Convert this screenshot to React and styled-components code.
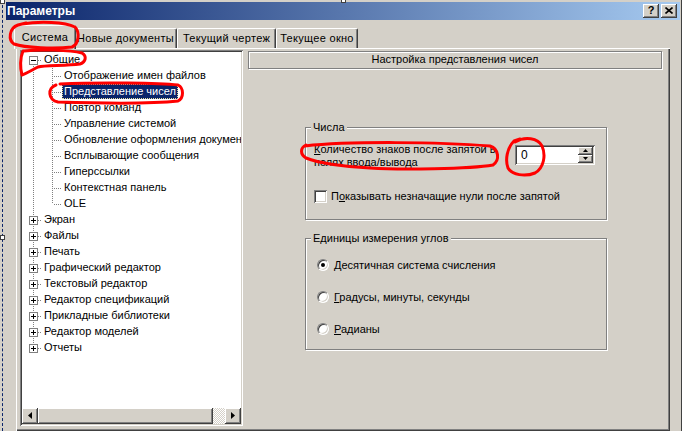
import React from 'react';
import styled, { createGlobalStyle, css } from 'styled-components';

const face = '#D4D0C8';
const shade = '#808080';
const dark = '#404040';
const navy = '#0A246A';

const GlobalStyle = createGlobalStyle`
  html, body { margin: 0; padding: 0; background: ${face}; }
  body {
    font-family: "Liberation Sans", Arial, sans-serif;
    font-size: 11px;
    color: #000;
  }
  * { box-sizing: border-box; }
`;

const raised = css`
  background: ${face};
  box-shadow: inset -1px -1px ${dark}, inset 1px 1px #fff,
    inset -2px -2px ${shade}, inset 2px 2px ${face};
`;

const sunken = css`
  box-shadow: inset 1px 1px ${shade}, inset -1px -1px #fff,
    inset 2px 2px ${dark}, inset -2px -2px ${face};
`;

const etched = css`
  border: 1px solid ${shade};
  box-shadow: inset 1px 1px #fff, 1px 1px #fff;
`;

const Screen = styled.div`
  position: relative;
  width: 682px;
  height: 431px;
  overflow: hidden;
  background: ${face};
  padding: 2px 1px 0 6px;
  border-right: 1px solid ${dark};

  &::before {
    content: '';
    position: absolute;
    left: 2px;
    top: 0;
    bottom: 0;
    border-left: 1px dashed ${navy};
  }
`;

const Handle = styled.span`
  position: absolute;
  width: 5px;
  height: 5px;
  background: #fff;
  border: 1px solid ${dark};
  left: ${(p) => p.$x}px;
  top: ${(p) => p.$y}px;
`;

const Window = styled.div`
  display: flex;
  flex-direction: column;
  height: 100%;
`;

const TitleBar = styled.div`
  height: 18px;
  display: flex;
  align-items: center;
  padding: 0 3px 0 1px;
  background: linear-gradient(to right, ${navy}, #A6CAF0);
`;

const Title = styled.span`
  color: #fff;
  font-weight: bold;
  font-size: 12px;
`;

const CaptionButtons = styled.div`
  margin-left: auto;
  display: flex;
  gap: 2px;
`;

const CaptionButton = styled.div`
  ${raised};
  width: 16px;
  height: 14px;
  display: flex;
  align-items: center;
  justify-content: center;
  font-weight: bold;
  font-size: 11px;
  line-height: 1;
`;

const TabStrip = styled.div`
  display: flex;
  align-items: flex-end;
  height: 28px;
  padding-left: 8px;
`;

const Tab = styled.div`
  position: relative;
  width: ${(p) => p.$w}px;
  height: ${(p) => (p.$active ? 24 : 20)}px;
  margin-right: ${(p) => (p.$active ? -2 : 0)}px;
  margin-bottom: ${(p) => (p.$active ? -1 : 0)}px;
  z-index: ${(p) => (p.$active ? 2 : 1)};
  background: ${face};
  border-top: 1px solid #fff;
  border-left: 1px solid #fff;
  border-right: 1px solid ${dark};
  border-radius: 2px 2px 0 0;
  box-shadow: inset -1px 0 ${shade};
  display: flex;
  justify-content: center;
  padding-top: ${(p) => (p.$active ? 5 : 3)}px;
  white-space: nowrap;
  letter-spacing: 0.3px;
`;

const Panel = styled.div`
  margin-left: 10px;
  width: 654px;
  height: 384px;
  display: flex;
  padding: 2px 0 0 4px;
  background: ${face};
  box-shadow: inset 1px 1px #fff, inset -1px -1px ${dark},
    inset -2px -2px ${shade};
`;

const Tree = styled.div`
  ${sunken};
  width: 223px;
  height: 376px;
  background: #fff;
  padding: 2px;
  display: flex;
  flex-direction: column;
`;

const TreeList = styled.div`
  flex: 1;
  overflow: hidden;
`;

const TreeRow = styled.div`
  display: flex;
  align-items: center;
  height: 16px;
  white-space: nowrap;
`;

const TreeLabel = styled.span`
  height: 15px;
  line-height: 13px;
  padding: 0 1px;
  border: 1px dotted ${(p) => (p.$selected ? '#E8DFA0' : 'transparent')};
  background: ${(p) => (p.$selected ? navy : 'transparent')};
  color: ${(p) => (p.$selected ? '#fff' : '#000')};
`;

const HScroll = styled.div`
  display: flex;
  height: 16px;
`;

const ScrollButton = styled.div`
  ${raised};
  width: 16px;
  height: 16px;
  display: flex;
  align-items: center;
  justify-content: center;
`;

const ScrollThumb = styled.div`
  ${raised};
  width: 175px;
`;

const ScrollTrack = styled.div`
  flex: 1;
  background: repeating-conic-gradient(#fff 0 25%, ${face} 0 50%) 0 0 / 2px 2px;
`;

const RightPane = styled.div`
  margin-left: 5px;
  width: 414px;
  display: flex;
  flex-direction: column;
`;

const Header = styled.div`
  ${etched};
  height: 18px;
  margin-top: 1px;
  text-align: center;
  line-height: 15px;
`;

const Group = styled.div`
  ${etched};
  position: relative;
  width: 302px;
  height: ${(p) => p.$h}px;
  margin: ${(p) => p.$top}px 0 0 57px;
  padding-left: 8px;
`;

const GroupCaption = styled.span`
  position: absolute;
  left: 5px;
  top: -8px;
  padding: 0 2px;
  background: ${face};
  line-height: 14px;
`;

const NumberRow = styled.div`
  display: flex;
  align-items: flex-start;
  margin-top: 15px;
`;

const FieldLabel = styled.div`
  width: 201px;
  line-height: 13px;
`;

const SpinField = styled.div`
  ${sunken};
  background: #fff;
  width: 80px;
  height: 20px;
  margin-top: 2px;
  padding: 2px;
  display: flex;
`;

const SpinValue = styled.span`
  flex: 1;
  padding-left: 4px;
  line-height: 16px;
  font-size: 12px;
`;

const SpinButtons = styled.div`
  width: 15px;
  display: flex;
  flex-direction: column;
`;

const SpinButton = styled.div`
  ${raised};
  flex: 1;
  display: flex;
  align-items: center;
  justify-content: center;
`;

const CheckRow = styled.label`
  display: flex;
  align-items: center;
  gap: 4px;
  margin-top: 21px;
`;

const CheckBox = styled.span`
  ${sunken};
  background: #fff;
  width: 13px;
  height: 13px;
`;

const RadioList = styled.div`
  display: flex;
  flex-direction: column;
  gap: 19px;
  padding: 20px 0 0 3px;
`;

const RadioRow = styled.label`
  display: flex;
  align-items: center;
  gap: 5px;
  height: 13px;
`;

const Radio = styled.span`
  width: 12px;
  height: 12px;
  border-radius: 50%;
  background: #fff;
  border: 1px solid;
  border-color: ${shade} #fff #fff ${shade};
  box-shadow: inset 1px 1px ${dark}, inset -1px -1px ${face};
  display: flex;
  align-items: center;
  justify-content: center;

  &::after {
    content: '';
    width: 4px;
    height: 4px;
    border-radius: 50%;
    background: ${(p) => (p.$checked ? '#000' : 'transparent')};
  }
`;

const Marks = styled.svg`
  position: absolute;
  left: 0;
  top: 0;
  pointer-events: none;
  z-index: 10;
`;

const tree = [
  { label: 'Общие', level: 0, exp: '-', first: true },
  { label: 'Отображение имен файлов', level: 1 },
  { label: 'Представление чисел', level: 1, selected: true },
  { label: 'Повтор команд', level: 1 },
  { label: 'Управление системой', level: 1 },
  { label: 'Обновление оформления документов', level: 1 },
  { label: 'Всплывающие сообщения', level: 1 },
  { label: 'Гиперссылки', level: 1 },
  { label: 'Контекстная панель', level: 1 },
  { label: 'OLE', level: 1, last: true },
  { label: 'Экран', level: 0, exp: '+' },
  { label: 'Файлы', level: 0, exp: '+' },
  { label: 'Печать', level: 0, exp: '+' },
  { label: 'Графический редактор', level: 0, exp: '+' },
  { label: 'Текстовый редактор', level: 0, exp: '+' },
  { label: 'Редактор спецификаций', level: 0, exp: '+' },
  { label: 'Прикладные библиотеки', level: 0, exp: '+' },
  { label: 'Редактор моделей', level: 0, exp: '+' },
  { label: 'Отчеты', level: 0, exp: '+', last: true },
];

const dots = { stroke: shade, strokeWidth: 1, strokeDasharray: '1 1' };

// connector lines and +/- box of one tree row
const TreeLines = ({ level, first, last, exp }) => {
  const w = level === 0 ? 20 : 40;
  return (
    <svg width={w} height="16" style={{ flex: 'none' }} shapeRendering="crispEdges">
      {level === 0 ? (
        <>
          <line x1="11.5" y1={first ? 8 : 0} x2="11.5" y2={last ? 8 : 16} {...dots} />
          <line x1="16" y1="8.5" x2="20" y2="8.5" {...dots} />
          <rect x="7.5" y="4.5" width="8" height="8" fill="#fff" stroke={shade} />
          <line x1="9" y1="8.5" x2="14" y2="8.5" stroke="#000" />
          {exp === '+' && <line x1="11.5" y1="6" x2="11.5" y2="11" stroke="#000" />}
        </>
      ) : (
        <>
          <line x1="11.5" y1="0" x2="11.5" y2="16" {...dots} />
          <line x1="30.5" y1="0" x2="30.5" y2={last ? 8 : 16} {...dots} />
          <line x1="32" y1="8.5" x2="40" y2="8.5" {...dots} />
        </>
      )}
    </svg>
  );
};

const Arrow = ({ dir }) => (
  <svg width="4" height="7" viewBox="0 0 4 7">
    <path d={dir === 'left' ? 'M4 0 L0 3.5 L4 7 Z' : 'M0 0 L4 3.5 L0 7 Z'} fill="#000" />
  </svg>
);

const SpinArrow = ({ up }) => (
  <svg width="5" height="3" viewBox="0 0 5 3">
    <path d={up ? 'M0 3 L2.5 0 L5 3 Z' : 'M0 0 L2.5 3 L5 0 Z'} fill="#000" />
  </svg>
);

const tabs = [
  { label: 'Система', w: 62, active: true },
  { label: 'Новые документы', w: 103 },
  { label: 'Текущий чертеж', w: 99 },
  { label: 'Текущее окно', w: 82 },
];

const App = () => (
  <>
    <GlobalStyle />
    <Screen>
      <Handle $x={0} $y={-1} />
      <Handle $x={341} $y={-2} />
      <Handle $x={0} $y={235} />
      <Window>
        <TitleBar>
          <Title>Параметры</Title>
          <CaptionButtons>
            <CaptionButton>?</CaptionButton>
            <CaptionButton>
              <svg width="8" height="7" viewBox="0 0 8 7">
                <path d="M0.5 0.5 L7.5 6.5 M7.5 0.5 L0.5 6.5" stroke="#000" strokeWidth="1.6" />
              </svg>
            </CaptionButton>
          </CaptionButtons>
        </TitleBar>

        <TabStrip>
          {tabs.map((t) => (
            <Tab key={t.label} $w={t.w} $active={t.active}>
              {t.label}
            </Tab>
          ))}
        </TabStrip>

        <Panel>
          <Tree>
            <TreeList>
              {tree.map((item) => (
                <TreeRow key={item.label}>
                  <TreeLines {...item} />
                  <TreeLabel $selected={item.selected}>{item.label}</TreeLabel>
                </TreeRow>
              ))}
            </TreeList>
            <HScroll>
              <ScrollButton><Arrow dir="left" /></ScrollButton>
              <ScrollThumb />
              <ScrollTrack />
              <ScrollButton><Arrow dir="right" /></ScrollButton>
            </HScroll>
          </Tree>

          <RightPane>
            <Header>Настройка представления чисел</Header>

            <Group $top={58} $h={93}>
              <GroupCaption>Числа</GroupCaption>
              <NumberRow>
                <FieldLabel>
                  <u>К</u>оличество знаков после запятой в полях ввода/вывода
                </FieldLabel>
                <SpinField>
                  <SpinValue>0</SpinValue>
                  <SpinButtons>
                    <SpinButton><SpinArrow up /></SpinButton>
                    <SpinButton><SpinArrow /></SpinButton>
                  </SpinButtons>
                </SpinField>
              </NumberRow>
              <CheckRow>
                <CheckBox />
                <span>П<u>о</u>казывать незначащие нули после запятой</span>
              </CheckRow>
            </Group>

            <Group $top={18} $h={112}>
              <GroupCaption>Единицы измерения углов</GroupCaption>
              <RadioList>
                <RadioRow>
                  <Radio $checked />
                  <span><u>Д</u>есятичная система счисления</span>
                </RadioRow>
                <RadioRow>
                  <Radio />
                  <span><u>Г</u>радусы, минуты, секунды</span>
                </RadioRow>
                <RadioRow>
                  <Radio />
                  <span><u>Р</u>адианы</span>
                </RadioRow>
              </RadioList>
            </Group>
          </RightPane>
        </Panel>
      </Window>

      {/* hand-drawn red marks */}
      <Marks width="682" height="431" fill="none" stroke="#FF0000" strokeWidth="3"
        strokeLinecap="round" strokeLinejoin="round">
        <path d="M22 24 C40 21 65 22 75 27 C80 32 79 44 72 47 C55 49 25 48 14 44 C8 40 9 28 18 25 L26 23" />
        <path d="M24 51 C40 49 70 50 82 53 C87 56 86 62 80 64 C65 66 45 65 38 67 C32 70 26 74 22 75 C20 68 20 58 23 51" />
        <path d="M60 84 C100 82 160 83 178 85 C184 88 184 98 178 101 C150 104 90 103 58 102 C48 100 47 88 56 85" />
        <path d="M305 146 C350 141 440 142 490 146 C499 149 500 160 493 165 C470 169 400 170 370 168 C345 167 318 163 306 158 C300 154 300 148 306 145" />
        <path d="M515 142 C525 136 538 138 542 146 C546 155 544 168 535 173 C525 177 512 175 508 168 C505 160 507 148 514 141 L520 139" />
      </Marks>
    </Screen>
  </>
);

export default App;
